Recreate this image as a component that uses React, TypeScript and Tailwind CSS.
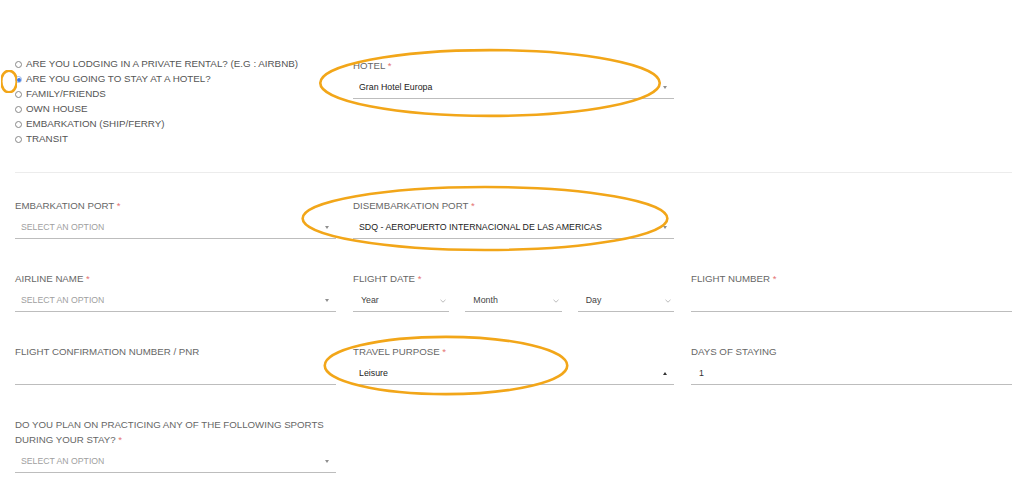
const font = { fontFamily: "'Liberation Sans', Arial, sans-serif" };

function Caret({ up = false }: { up?: boolean }) {
  return up ? (
    <span className="h-0 w-0 border-x-[2.5px] border-b-[3px] border-x-transparent border-b-[#333]" />
  ) : (
    <span className="h-0 w-0 border-x-[2.5px] border-t-[3px] border-x-transparent border-t-[#8f8f8f]" />
  );
}

function Label({ text, required = false }: { text: string; required?: boolean }) {
  return (
    <div className="mb-[4px] text-[9.7px] uppercase leading-[15px] text-[#666]">
      {text}
      {required && <span className="text-[#e57373]"> *</span>}
    </div>
  );
}

function Select({ value, placeholder = "Select an option", up = false }: { value?: string; placeholder?: string; up?: boolean }) {
  return (
    <div className="flex h-[22px] items-center justify-between border-b border-[#bdbdbd] pl-[6px] pr-[7px]">
      {value ? (
        <span className="text-[8.8px] text-[#222]">{value}</span>
      ) : (
        <span className="text-[8.7px] uppercase text-[#a0a0a0]">{placeholder}</span>
      )}
      <Caret up={up} />
    </div>
  );
}

function SmallSelect({ value }: { value: string }) {
  return (
    <div className="flex h-[22px] items-center justify-between border-b border-[#bdbdbd] pl-[8px] pr-[3px]">
      <span className="text-[8.8px] text-[#444]">{value}</span>
      <svg width="6" height="4" viewBox="0 0 6 4" className="text-[#aaa]">
        <path d="M0.5 0.8l2.5 2.4 2.5-2.4" fill="none" stroke="currentColor" strokeWidth="0.8" />
      </svg>
    </div>
  );
}

function Input({ value }: { value?: string }) {
  return (
    <div className="flex h-[22px] items-center border-b border-[#bdbdbd] pl-[8px]">
      <span className="text-[8.8px] text-[#333]">{value}</span>
    </div>
  );
}

function Ellipse({ className }: { className: string }) {
  return (
    <svg className={`pointer-events-none absolute ${className}`} viewBox="0 0 100 100" preserveAspectRatio="none">
      <ellipse cx="50" cy="50" rx="48.5" ry="47" fill="none" stroke="#f2a619" strokeWidth="2.6" vectorEffect="non-scaling-stroke" />
    </svg>
  );
}

const stays = [
  "Are you lodging in a private rental? (E.G : Airbnb)",
  "Are you going to stay at a hotel?",
  "Family/Friends",
  "Own house",
  "Embarkation (ship/ferry)",
  "Transit",
];

export default function App() {
  return (
    <div className="relative h-[497px] w-[1024px] overflow-hidden bg-white" style={font}>
      <div className="pl-[15px] pr-[12px]">
        <div className="grid grid-cols-3 gap-x-[17px] pt-[57px]">
          <div className="flex flex-col">
            {stays.map((s, i) => (
              <label key={s} className="flex h-[15px] items-center gap-[4px] text-[9.8px] uppercase text-[#555]">
                {i === 1 ? (
                  <span className="flex h-[7px] w-[7px] items-center justify-center rounded-full border border-[#9bb7e6] bg-white">
                    <span className="h-[4px] w-[4px] rounded-full bg-[#3b78e7]" />
                  </span>
                ) : (
                  <span className="h-[7px] w-[7px] rounded-full border border-[#888]" />
                )}
                {s}
              </label>
            ))}
          </div>
          <div className="pt-[1px]">
            <Label text="Hotel" required />
            <Select value="Gran Hotel Europa" />
          </div>
          <div />
        </div>

        <div className="mt-[25px] border-t border-[#ececec]" />

        <div className="grid grid-cols-3 gap-x-[17px] gap-y-[32px] pt-[25px]">
          <div>
            <Label text="Embarkation port" required />
            <Select />
          </div>
          <div>
            <Label text="Disembarkation port" required />
            <Select value="SDQ - AEROPUERTO INTERNACIONAL DE LAS AMERICAS" />
          </div>
          <div />

          <div>
            <Label text="Airline name" required />
            <Select />
          </div>
          <div>
            <Label text="Flight date" required />
            <div className="grid grid-cols-3 gap-x-[16px]">
              <SmallSelect value="Year" />
              <SmallSelect value="Month" />
              <SmallSelect value="Day" />
            </div>
          </div>
          <div>
            <Label text="Flight number" required />
            <Input />
          </div>

          <div>
            <Label text="Flight confirmation number / PNR" />
            <Input />
          </div>
          <div>
            <Label text="Travel purpose" required />
            <Select value="Leisure" up />
          </div>
          <div>
            <Label text="Days of staying" />
            <Input value="1" />
          </div>

          <div>
            <Label text="Do you plan on practicing any of the following sports during your stay?" required />
            <Select />
          </div>
        </div>

        <div className="mt-[24px] border-t border-[#ececec]" />
      </div>

      <Ellipse className="left-[1px] top-[70px] h-[23px] w-[16px]" />
      <Ellipse className="left-[315px] top-[48px] h-[70px] w-[350px]" />
      <Ellipse className="left-[297px] top-[185px] h-[67px] w-[376px]" />
      <Ellipse className="left-[321px] top-[335px] h-[61px] w-[250px]" />
    </div>
  );
}
